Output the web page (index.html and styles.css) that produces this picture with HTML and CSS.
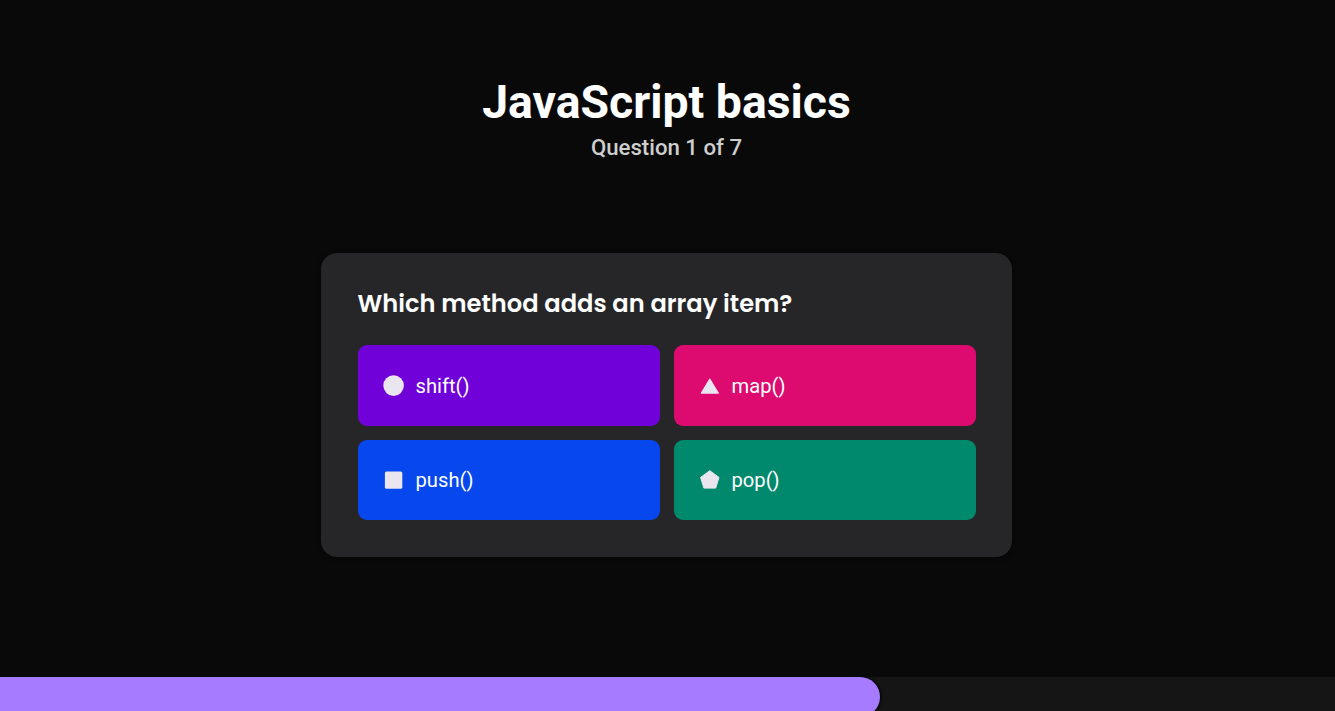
FILE: index.html
```html
<!DOCTYPE html>
<html lang="en">
<head>
<meta charset="utf-8">
<title>JavaScript basics</title>
<link rel="stylesheet" href="styles.css">
</head>
<body>
<main class="quiz">
  <header class="quiz-header">
    <h1 class="title">JavaScript basics</h1>
    <p class="progress-label">Question 1 of 7</p>
  </header>
  <section class="card">
    <h2 class="question">Which method adds an array item?</h2>
    <div class="answers">
      <button class="answer purple"><svg class="shape" viewBox="0 0 22 22"><circle cx="10.6" cy="10.6" r="10.3"/></svg><span>shift()</span></button>
      <button class="answer pink"><svg class="shape" viewBox="0 0 22 22"><path d="M10.8 3.8 19.5 18.2H2.1Z" stroke-width="1" stroke-linejoin="round"/></svg><span>map()</span></button>
      <button class="answer blue"><svg class="shape" viewBox="0 0 22 22"><rect x="1.9" y="2.4" width="17.4" height="17.4" rx="1.5"/></svg><span>push()</span></button>
      <button class="answer green"><svg class="shape" viewBox="0 0 22 22"><path d="M10.8 1.7 20 8.4 16.7 19.1H4.9L1.6 8.4Z" stroke-width="1" stroke-linejoin="round"/></svg><span>pop()</span></button>
    </div>
  </section>
  <div class="timer"><div class="timer-fill"></div></div>
</main>
</body>
</html>
```

FILE: styles.css
```css
* { box-sizing: border-box; }
body { margin: 0; background: #090909; color: #fff; font-family: Roboto, sans-serif; }
.quiz { height: 711px; display: flex; flex-direction: column; align-items: center; overflow: hidden; }
.quiz-header { width: 100%; height: 253px; padding-top: 74px; text-align: center; }
.title { margin: 0 2px 0 0; font-size: 46.4px; line-height: 56px; font-weight: 700; }
.progress-label { margin: 3px 2px 0 0; font-size: 22.2px; line-height: 28px; font-weight: 500; color: #cecece; }
.card { width: 691px; height: 304px; margin-right: 2px; padding: 35px 36.5px 36px; border-radius: 16px; background: #262628; box-shadow: 0 1px 4px rgba(0, 0, 0, .5); }
.question { margin: 0; height: 57.4px; font: 600 24.17px/32px Poppins, Inter, sans-serif; white-space: nowrap; }
.answers { display: grid; grid-template-columns: 1fr 1fr; grid-auto-rows: 80.3px; gap: 14.3px 14px; }
.answer { display: flex; align-items: center; gap: 11px; padding: 0 25px; border: 0; border-radius: 9px; color: #fff; font: 400 20.2px/28px Roboto, sans-serif; }
.purple { background: #7002d9; }
.pink { background: #dd0a6f; }
.blue { background: #0648ee; }
.green { background: #01896d; }
.shape { width: 22px; height: 22px; flex: none; fill: #e9e6f0; stroke: #e9e6f0; stroke-width: 0; }
.timer { align-self: stretch; height: 34px; flex: none; margin-top: auto; background: #151515; overflow: hidden; }
.timer-fill { width: 880px; height: 40px; border-radius: 0 20px 20px 0; background: #a67bff; box-shadow: 1px 0 3px #000; }
```
